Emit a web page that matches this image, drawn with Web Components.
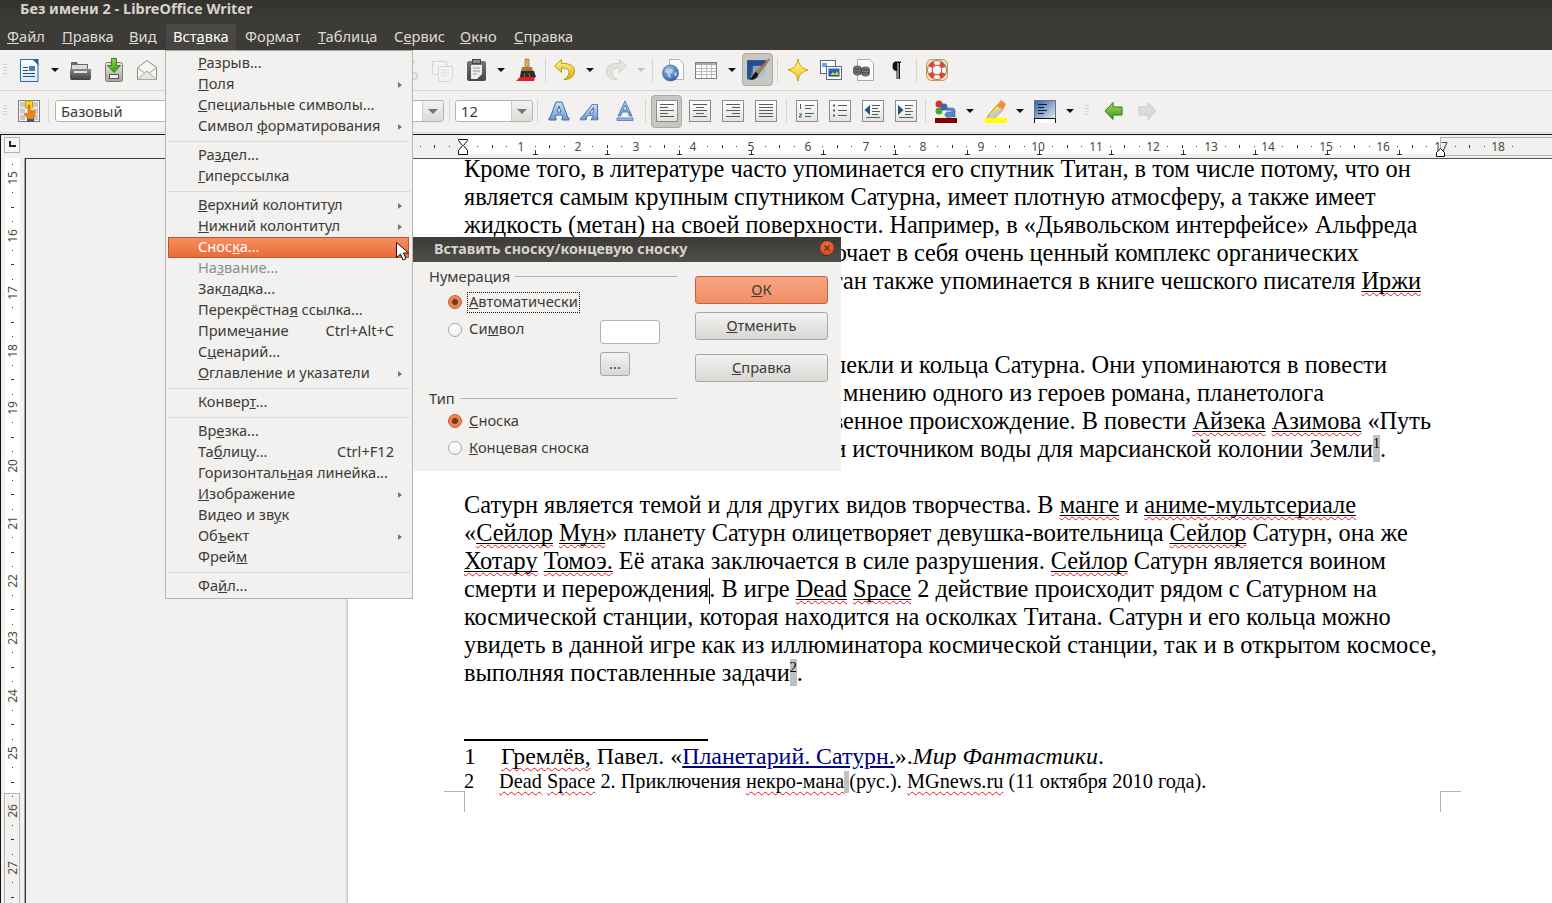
<!DOCTYPE html>
<html lang="ru">
<head>
<meta charset="utf-8">
<title>Без имени 2 - LibreOffice Writer</title>
<style>
  html, body { margin: 0; padding: 0; background: #f2f1f0; overflow: hidden; }
</style>
</head>
<body>
<lo-window>
  <lo-titlebar>Без имени 2 - LibreOffice Writer</lo-titlebar>
  <lo-menubar>
    <lo-menu-title w="55"><u>Ф</u>айл</lo-menu-title>
    <lo-menu-title w="67"><u>П</u>равка</lo-menu-title>
    <lo-menu-title w="44"><u>В</u>ид</lo-menu-title>
    <lo-menu-title w="70" active>Вст<u>а</u>вка</lo-menu-title>
    <lo-menu-title w="73" style="margin-left:2px">Фо<u>р</u>мат</lo-menu-title>
    <lo-menu-title w="76"><u>Т</u>аблица</lo-menu-title>
    <lo-menu-title w="66">С<u>е</u>рвис</lo-menu-title>
    <lo-menu-title w="54"><u>О</u>кно</lo-menu-title>
    <lo-menu-title w="70"><u>С</u>правка</lo-menu-title>
  </lo-menubar>

  <lo-toolbar>
    <lo-grip w="12"></lo-grip>
    <lo-tool icon="newdoc"></lo-tool><lo-drop w="19"></lo-drop>
    <lo-tool icon="open"></lo-tool>
    <lo-tool icon="save"></lo-tool>
    <lo-tool icon="mail"></lo-tool>
    <lo-gap w="230"></lo-gap>
    <lo-tool icon="cut"></lo-tool>
    <lo-tool icon="copy"></lo-tool>
    <lo-tool icon="paste"></lo-tool><lo-drop w="18"></lo-drop>
    <lo-tool icon="brush"></lo-tool>
    <lo-sep w="4"></lo-sep>
    <lo-tool icon="undo"></lo-tool><lo-drop w="20"></lo-drop>
    <lo-tool icon="redo"></lo-tool><lo-drop w="16" off></lo-drop>
    <lo-sep w="7"></lo-sep>
    <lo-tool icon="link"></lo-tool>
    <lo-tool icon="table"></lo-tool><lo-drop w="19"></lo-drop>
    <lo-tool icon="draw" active></lo-tool>
    <lo-sep w="7"></lo-sep>
    <lo-tool icon="star"></lo-tool>
    <lo-tool icon="gallery"></lo-tool>
    <lo-tool icon="data"></lo-tool>
    <lo-tool icon="pilcrow"></lo-tool>
    <lo-sep w="7"></lo-sep>
    <lo-tool icon="help"></lo-tool>
  </lo-toolbar>

  <lo-toolbar second>
    <lo-grip w="12"></lo-grip>
    <lo-tool icon="styles"></lo-tool>
    <lo-sep w="6"></lo-sep>
    <lo-gap w="4"></lo-gap>
    <lo-combo w="389">Базовый</lo-combo>
    <lo-sep w="11"></lo-sep>
    <lo-combo w="78">12</lo-combo>
    <lo-sep w="9"></lo-sep>
    <lo-tool icon="bold"></lo-tool>
    <lo-tool icon="italic"></lo-tool>
    <lo-tool icon="underline"></lo-tool>
    <lo-sep w="9"></lo-sep>
    <lo-tool icon="alignleft" active></lo-tool>
    <lo-tool icon="aligncenter"></lo-tool>
    <lo-tool icon="alignright"></lo-tool>
    <lo-tool icon="alignjustify"></lo-tool>
    <lo-sep w="8"></lo-sep>
    <lo-tool icon="numbers"></lo-tool>
    <lo-tool icon="bullets"></lo-tool>
    <lo-tool icon="outdent"></lo-tool>
    <lo-tool icon="indent"></lo-tool>
    <lo-sep w="7"></lo-sep>
    <lo-tool icon="fontcolor"></lo-tool><lo-drop w="16"></lo-drop>
    <lo-tool icon="highlight" w="35"></lo-tool><lo-drop w="14"></lo-drop>
    <lo-tool icon="parbg" w="36"></lo-tool><lo-drop w="14"></lo-drop>
    <lo-grip w="20" center></lo-grip>
    <lo-tool icon="back"></lo-tool>
    <lo-tool icon="forward"></lo-tool>
  </lo-toolbar>

  <lo-workspace>
    <lo-document>
      <lo-line>Кроме того, в литературе часто упоминается его спутник Титан, в том числе потому, что он</lo-line>
      <lo-line>является самым крупным спутником Сатурна, имеет плотную атмосферу, а также имеет</lo-line>
      <lo-line>жидкость (метан) на своей поверхности. Например, в «Дьявольском интерфейсе» Альфреда</lo-line>
      <lo-line end="1359">ючает в себя очень ценный комплекс органических</lo-line>
      <lo-line end="1421">Титан также упоминается в книге чешского писателя <lo-sp line>Иржи</lo-sp></lo-line>
      <lo-line></lo-line>
      <lo-line></lo-line>
      <lo-line end="1387">лекли и кольца Сатурна. Они упоминаются в повести</lo-line>
      <lo-line end="1324">мнению одного из героев романа, планетолога</lo-line>
      <lo-line end="1431">венное происхождение. В повести <lo-sp line>Айзека</lo-sp> <lo-sp line>Азимова</lo-sp> «Путь</lo-line>
      <lo-line end="1386">и источником воды для марсианской колонии Земли<lo-anchor>1</lo-anchor>.</lo-line>
      <lo-line></lo-line>
      <lo-line>Сатурн является темой и для других видов творчества. В <lo-sp line>манге</lo-sp> и <lo-sp line>аниме-мультсериале</lo-sp></lo-line>
      <lo-line>«<lo-sp line>Сейлор</lo-sp> <lo-sp line>Мун</lo-sp>» планету Сатурн олицетворяет девушка-воительница <lo-sp line>Сейлор</lo-sp> Сатурн, она же</lo-line>
      <lo-line><lo-sp line>Хотару</lo-sp> <lo-sp line>Томоэ.</lo-sp> Её атака заключается в силе разрушения. <lo-sp line>Сейлор</lo-sp> Сатурн является воином</lo-line>
      <lo-line>смерти и перерождения<lo-caret></lo-caret>. В игре <lo-sp line>Dead</lo-sp> <lo-sp line>Space</lo-sp> 2 действие происходит рядом с Сатурном на</lo-line>
      <lo-line>космической станции, которая находится на осколках Титана. Сатурн и его кольца можно</lo-line>
      <lo-line>увидеть в данной игре как из иллюминатора космической станции, так и в открытом космосе,</lo-line>
      <lo-line>выполняя поставленные задачи<lo-anchor>2</lo-anchor>.</lo-line>
      <lo-footnotes>
        <lo-note n="1" size="23.9" h="24" pad="37"><lo-sp>Гремлёв,</lo-sp> Павел. «<u style="color:#000080">Планетарий. Сатурн.</u>».<i>Мир Фантастики</i>.</lo-note>
        <lo-note n="2" size="20.3" h="26" pad="35"><lo-sp>Dead</lo-sp> <lo-sp>Space</lo-sp> 2. Приключения <lo-sp>некро-мана</lo-sp><lo-shade></lo-shade>(рус.). <lo-sp>MGnews.ru</lo-sp> (11 октября 2010 года).</lo-note>
      </lo-footnotes>
    </lo-document>
  </lo-workspace>

  <lo-menu>
    <lo-item arrow="0"><u>Р</u>азрыв...</lo-item>
    <lo-item arrow="1"><u>П</u>оля</lo-item>
    <lo-item><u>С</u>пециальные символы...</lo-item>
    <lo-item arrow="1">Символ <u>ф</u>орматирования</lo-item>
    <lo-divider></lo-divider>
    <lo-item>Ра<u>з</u>дел...</lo-item>
    <lo-item><u>Г</u>иперссылка</lo-item>
    <lo-divider></lo-divider>
    <lo-item arrow="1"><u>В</u>ерхний колонтитул</lo-item>
    <lo-item arrow="1"><u>Н</u>ижний колонтитул</lo-item>
    <lo-item hot>Снос<u>к</u>а...</lo-item>
    <lo-item off>На<u>з</u>вание...</lo-item>
    <lo-item>Зак<u>л</u>адка...</lo-item>
    <lo-item>Перекрёстна<u>я</u> ссылка...</lo-item>
    <lo-item keys="Ctrl+Alt+C">Приме<u>ч</u>ание</lo-item>
    <lo-item>С<u>ц</u>енарий...</lo-item>
    <lo-item arrow="1"><u>О</u>главление и указатели</lo-item>
    <lo-divider></lo-divider>
    <lo-item>Конвер<u>т</u>...</lo-item>
    <lo-divider></lo-divider>
    <lo-item>Вр<u>е</u>зка...</lo-item>
    <lo-item keys="Ctrl+F12">Та<u>б</u>лицу...</lo-item>
    <lo-item>Горизонталь<u>н</u>ая линейка...</lo-item>
    <lo-item arrow="1"><u>И</u>зображение</lo-item>
    <lo-item>Видео и зв<u>у</u>к</lo-item>
    <lo-item arrow="1">Об<u>ъ</u>ект</lo-item>
    <lo-item>Фрей<u>м</u></lo-item>
    <lo-divider></lo-divider>
    <lo-item>Фа<u>й</u>л...</lo-item>
  </lo-menu>

  <lo-dialog heading="Вставить сноску/концевую сноску">
    <lo-frame-head>Нумерация</lo-frame-head>
    <lo-radio-row>
      <lo-radio checked focused><u>А</u>втоматически</lo-radio>
    </lo-radio-row>
    <lo-radio-row tall>
      <lo-radio>Си<u>м</u>вол</lo-radio>
      <lo-field></lo-field>
    </lo-radio-row>
    <lo-radio-row tall>
      <span></span>
      <lo-button small>...</lo-button>
    </lo-radio-row>
    <lo-frame-head second>Тип</lo-frame-head>
    <lo-radio-row type>
      <lo-radio checked><u>С</u>носка</lo-radio>
    </lo-radio-row>
    <lo-radio-row type last>
      <lo-radio><u>К</u>онцевая сноска</lo-radio>
    </lo-radio-row>
    <lo-button slot="actions" primary><u>О</u>К</lo-button>
    <lo-button slot="actions"><u>О</u>тменить</lo-button>
    <lo-button slot="actions" spaced><u>С</u>правка</lo-button>
  </lo-dialog>

  <lo-pointer></lo-pointer>
</lo-window>

<script>
// shared by all shadow roots, Ubuntu itself is not installed
const UI_FONT = '"Noto Sans", "Open Sans", sans-serif';
const TEXT_COLOR = '#3c3b37';

const grad = (id, a, b) => `<linearGradient id="${id}" x1="0" y1="0" x2="0" y2="1"><stop offset="0" stop-color="${a}"/><stop offset="1" stop-color="${b}"/></linearGradient>`;

// the boxed paragraph icons of the formatting bar
function boxed(inner) {
    return `<defs>${grad('bx', '#ffffff', '#dfe4df')}</defs>
        <rect x="1.5" y="1.5" width="21" height="21" fill="url(#bx)" stroke="#8b8d8a"/>
        <path d="${inner}" fill="none" stroke="#5a5c5a"/>`;
}

const LETTER_A = 'M9 3h6l6 16h1v2h-7v-2h1l-1-3H9l-1 3h1v2H2v-2h1zM12 7l-2 6h4z';

const ICONS = {
    newdoc: `<defs>${grad('a', '#ffffff', '#dce8f2')}</defs>
        <path d="M3.5 1.5H17l4 4v18H3.5z" fill="url(#a)" stroke="#2a6ca6"/>
        <path d="M15 1h6.500v6.500z" fill="#1f5f9c"/>
        <path d="M6 9.500h5M6 12.500h5M6 15.500h12M6 18.500h12" stroke="#1d4f80"/>
        <rect x="12" y="8" width="6" height="5" fill="#3f7fbd"/>`,
    open: `<defs>${grad('a', '#8a8a88', '#3f3f3e')}</defs>
        <path d="M2 4h6l1 2h10v7H2z" fill="#5c6a80"/>
        <rect x="3" y="7" width="15" height="5" fill="#dedcd8"/>
        <path d="M1 11h21v9l-1 2H2l-1-2z" fill="url(#a)"/>
        <rect x="5" y="13" width="13" height="2" fill="#dedede"/>`,
    save: `<defs>${grad('a', '#e6e6da', '#a4a498')}${grad('b', '#86d24a', '#3f9a1c')}</defs>
        <rect x="3.500" y="4.500" width="17" height="19" rx="2" fill="url(#a)" stroke="#7c7c74"/>
        <rect x="7.500" y="16.500" width="9" height="4" fill="#f0f0ea" stroke="#555"/>
        <path d="M9.500.5h5v7h4l-6.500 7-6.500-7h4z" fill="url(#b)" stroke="#38861a"/>`,
    mail: `<path d="M2.500 9.500 12 2.500l9.500 7v12h-19z" fill="#f6f5f2" stroke="#8c8c8a"/>
        <path d="M2.500 21.500 12 13l9.500 8.500z" fill="#e6e5e1" stroke="#a8a8a5"/>
        <path d="M2.500 9.500 9.500 15M21.500 9.500 14.500 15" fill="none" stroke="#9c9c99"/>`,
    cut: `<g fill="none" stroke="#d5d4d1" stroke-width="2"><path d="M8 2l5 12M16 2l-5 12"/><circle cx="8" cy="18" r="3"/><circle cx="16" cy="18" r="3"/></g>`,
    copy: `<g fill="#f4f3f1" stroke="#d6d5d2"><path d="M1.500 3.500h14v13h-14z"/><path d="M7.500 8.500h14v11l-4 4h-10z"/></g>
        <path d="M10 12h9M10 15h9M10 18h6" stroke="#dedddb"/>`,
    paste: `<defs>${grad('a', '#777775', '#444442')}</defs>
        <rect x="3" y="3" width="19" height="20" rx="2" fill="url(#a)"/>
        <path d="M7 7h11v9l-5 5H7z" fill="#eeeeea"/>
        <rect x="8.500" y="1.500" width="8" height="4" fill="#8c8c8a" stroke="#444"/>
        <path d="M9 10h7M9 13h7M9 16h4" stroke="#999"/>`,
    brush: `<path d="M10 1h4v8h-4z" fill="#d9a860" stroke="#9c6c2c" stroke-width=".6"/>
        <path d="M7 9h10l1 4H6z" fill="#a87838"/>
        <path d="M6 13h13l2 6H5z" fill="#2a2a2a"/>
        <path d="M14 15l1 4M10 15l-1 4" stroke="#777"/>
        <path d="M1 23l4-4h15l-1 4z" fill="#e01e24"/>`,
    undo: `<defs>${grad('a', '#fff49a', '#d8b200')}</defs>
        <path d="M9.500 1.500 2.500 8l7 6.500V10c5 0 7.500 1 7.500 4.500 0 3-2.500 5.500-5 7 6 .5 10.500-3.500 10.500-8.500C22.500 7 16 5 9.500 5.500z" fill="url(#a)" stroke="#b89c14"/>`,
    redo: `<path d="M14.500 1.500l7 6.500-7 6.500V10c-5 0-7.500 1-7.500 4.500 0 3 2.500 5.500 5 7-6 .5-10.500-3.500-10.500-8.500C1.500 7 8 5 14.500 5.500z" fill="#e4e3e0" stroke="#d0cfcc"/>`,
    link: `<defs><radialGradient id="a" cx=".4" cy=".3" r=".8"><stop offset="0" stop-color="#9cc4ea"/><stop offset="1" stop-color="#24569c"/></radialGradient></defs>
        <path d="M8.500 1.500h10l4 4v16h-14z" fill="#fbfbfa" stroke="#b4b4b2"/>
        <circle cx="9.500" cy="15" r="8" fill="url(#a)" stroke="#2a5a98" stroke-width=".6"/>
        <path d="M5 11c3-1 4 1 6 0l1 3-3 2 1 4-3-1-1-4-2-1zM13 15l3-1v3l-2 2z" fill="#c4d8ec" opacity=".8"/>`,
    table: `<rect x="1.500" y="4.500" width="21" height="16" fill="#fbfbf9" stroke="#7e807e"/>
        <rect x="2" y="5" width="20" height="2" fill="#a8aaa8"/>
        <path d="M2 10.500h20M2 13.500h20M2 16.500h20M7.500 7v13M12.500 7v13M17.500 7v13" stroke="#bcbebc"/>`,
    draw: `<defs><linearGradient id="a" x1="0" y1="0" x2="1" y2="1"><stop offset="0" stop-color="#2a66aa"/><stop offset="1" stop-color="#c4d4e6"/></linearGradient></defs>
        <path d="M1.500 2.500h18v5H6.500v9l-2 4.500h-3z" fill="#1f4f8f" stroke="#15396c" stroke-width=".6"/>
        <path d="M6.500 7.500h13v13H4z" fill="url(#a)" opacity=".55"/>
        <path d="M23 .5l.8.8L12.500 16l-3-2.200z" fill="#b07c48" stroke="#7c5228" stroke-width=".4"/>
        <path d="M9.500 13.800l3 2.200c-1 4.500-5 6.500-9.500 5.500 3.500-1.500 4-5.500 6.500-7.700z" fill="#161616"/>`,
    star: `<defs>${grad('a', '#fff8b0', '#e8c400')}</defs>
        <path d="M12 1c1 6 3 9 10 11-7 2-9 5-10 11-1-6-3-9-10-11 7-2 9-5 10-11z" fill="url(#a)" stroke="#c4a410"/>`,
    gallery: `<defs>${grad('a', '#2f6fb4', '#1a4c8a')}</defs>
        <rect x="1.500" y="2.500" width="15" height="13" fill="#fafaf8" stroke="#5a6a80"/>
        <rect x="3" y="5" width="5" height="4" fill="#7aa0cc"/>
        <rect x="7.500" y="8.500" width="15" height="13" fill="#fafaf8" stroke="#5a6a80"/>
        <rect x="9.500" y="10.500" width="11" height="8" fill="url(#a)"/>
        <path d="M11 17l3-3 2 2 2-3 2 4z" fill="#e6c84c"/>`,
    data: `<path d="M5.500 1.500h12l4 4v17h-16z" fill="#fbfbfa" stroke="#a8a8a6"/>
        <g fill="#7a7a78" stroke="#444" stroke-width=".7"><rect x="1.500" y="8" width="8" height="9" rx="3"/><rect x="9.500" y="9" width="8" height="9" rx="3"/></g>
        <path d="M2 11h7M2 14h7M10 12h7M10 15h7" stroke="#3a3a3a"/>`,
    pilcrow: `<path d="M10.500 3.500h5.500v1.500h-1v16h-1.500V5h-1v16h-1v-8c-2.500 0-4-1.800-4-4.700s1.500-4.800 3-4.800z" fill="#111"/>`,
    help: `<rect x="1.500" y="1.500" width="21" height="21" rx="5" fill="#f2e2bc" stroke="#c09858"/>
        <circle cx="12" cy="12" r="9.500" fill="#fbfbfb" stroke="#b06a58"/>
        <circle cx="12" cy="12" r="7.200" fill="none" stroke="#e0443a" stroke-width="4.600" stroke-dasharray="5.600 5.700" stroke-dashoffset="-2.850"/>
        <circle cx="12" cy="12" r="4.800" fill="#f6f5f3" stroke="#b0483c"/>`,
    styles: `<rect x="1.500" y="1.500" width="21" height="21" fill="#f4f4f0" stroke="#7c7e7c"/>
        <g fill="#c6c8c4"><rect x="3" y="3" width="5" height="5"/><rect x="16" y="3" width="5" height="5"/><rect x="3" y="9.500" width="5" height="5"/><rect x="16" y="9.500" width="5" height="5"/><rect x="3" y="16" width="5" height="5"/><rect x="16" y="16" width="5" height="5"/></g>
        <rect x="8.500" y="2" width="7" height="7" fill="#f8d830" stroke="#c8a010"/>
        <rect x="10" y="18" width="7" height="5" fill="#2f5a9c"/>
        <path d="M11 6h2v5l5 1v5l-2 3h-5l-4-5 2-1 2 1z" fill="#f08418" stroke="#c46408" stroke-width=".6"/>`,
    bold: `<defs>${grad('a', '#cfe0f5', '#6d9ad4')}</defs>
        <path d="${LETTER_A}" fill="url(#a)" stroke="#3a6aa8"/>`,
    italic: `<defs>${grad('a', '#cfe0f5', '#6d9ad4')}</defs>
        <path d="${LETTER_A}" fill="url(#a)" stroke="#3a6aa8" transform="translate(5 3) skewX(-22) scale(.9 .85)"/>`,
    underline: `<defs>${grad('a', '#cfe0f5', '#6d9ad4')}</defs>
        <path d="M12 2 5 17h2.500l1.500-4h6l1.500 4H19zM12 6l2 5h-4z" fill="url(#a)" stroke="#3a6aa8" stroke-width=".8"/>
        <rect x="4" y="19" width="16" height="2.500" fill="#8fb8e4" stroke="#3a6aa8" stroke-width=".7"/>`,
    alignleft: boxed('M5 5.500h14M5 8.500h8M5 11.500h14M5 14.500h8M5 17.500h14'),
    aligncenter: boxed('M5 5.500h14M8 8.500h8M5 11.500h14M8 14.500h8M5 17.500h14'),
    alignright: boxed('M5 5.500h14M11 8.500h8M5 11.500h14M11 14.500h8M5 17.500h14'),
    alignjustify: boxed('M5 5.500h14M5 8.500h14M5 11.500h14M5 14.500h14M5 17.500h14'),
    numbers: boxed('M10 6.500h9M10 9.500h6M10 14.500h9M10 17.500h6') + `<path d="M5.500 5v5M4 15h3l-3 3h3" fill="none" stroke="#2f5d9c"/>`,
    bullets: boxed('M10 6.500h9M10 11.500h9M10 16.500h9') + `<path d="M5 5.500h2v2H5zM5 10.500h2v2H5zM5 15.500h2v2H5z" fill="#5a5c5a"/>`,
    outdent: boxed('M11 6.500h8M11 9.500h6M11 12.500h8M11 15.500h6M5 18.500h14') + `<path d="M9 6v10L3.500 11z" fill="#1f4f8f"/>`,
    indent: boxed('M11 6.500h8M11 9.500h6M11 12.500h8M11 15.500h6M5 18.500h14') + `<path d="M4 6v10L9.500 11z" fill="#1f4f8f"/>`,
    fontcolor: `<circle cx="5" cy="5" r="3.500" fill="#d8322c"/><circle cx="5" cy="12" r="3.500" fill="#48a828"/><circle cx="10" cy="8" r="3.500" fill="#3468b4"/>
        <path d="M12 9h6c2 0 3 1 3 3v6h-2v-1c-2 2-8 2-8-1 0-3 3-3 7-3 0-2-3-2-5-1z" fill="#5f86c0" stroke="#2f5d9c" stroke-width=".6"/>
        <rect x="1" y="19" width="22" height="5.500" fill="#800000"/>`,
    highlight: `<path d="M3 18 13 6l6 5-8 8z" fill="#f0d860" stroke="#a89838"/>
        <path d="M13 6l4-5 5 4-3 6z" fill="#f09040"/>
        <path d="M3 18l3 1h5l8-8-2-2z" fill="#c8c8c4"/>
        <rect x="1" y="19" width="22" height="5.500" fill="#ffff00"/>`,
    parbg: `<defs><linearGradient id="a" x1="0" y1="0" x2="1" y2="1"><stop offset="0" stop-color="#2f5fa8"/><stop offset="1" stop-color="#e4eaf2"/></linearGradient></defs>
        <rect x="1.500" y="1.500" width="21" height="18" fill="url(#a)" stroke="#70757c"/>
        <path d="M5 5.500h9M5 8.500h6M5 11.500h9M5 14.500h6" stroke="#0c1c3c"/>
        <rect x="1.500" y="19.500" width="21" height="5" fill="#fff" stroke="#111"/>`,
    back: `<defs>${grad('a', '#a6dc5a', '#3f9418')}</defs>
        <path d="M11 3.500 3 12l8 8.500V16h9V8h-9z" fill="url(#a)" stroke="#2f7810"/>`,
    forward: `<path d="M13 3.500l8 8.500-8 8.500V16H4V8h9z" fill="#dcdbd8" stroke="#cac9c6"/>`
};

// ---- window frame ----
class LoWindow extends HTMLElement {
    constructor() {
        super();
        this.attachShadow({ mode: 'open' }).innerHTML = `
            <style>
                :host {
                    display: flex;
                    flex-direction: column;
                    position: relative;
                    width: 1552px;
                    height: 903px;
                    overflow: hidden;
                    background: #f2f1f0;
                    color: ${TEXT_COLOR};
                    font-family: ${UI_FONT};
                }
            </style>
            <slot></slot>`;
    }
}

class LoTitlebar extends HTMLElement {
    constructor() {
        super();
        this.attachShadow({ mode: 'open' }).innerHTML = `
            <style>
                :host {
                    display: block;
                    height: 24px;
                    box-sizing: border-box;
                    padding-left: 20px;
                    background: linear-gradient(#33322e, #3c3b37);
                    color: #d8d4ca;
                    font: bold 14.5px/16px ${UI_FONT};
                    white-space: nowrap;
                }
            </style>
            <slot></slot>`;
    }
}

class LoMenubar extends HTMLElement {
    constructor() {
        super();
        this.attachShadow({ mode: 'open' }).innerHTML = `
            <style>
                :host {
                    display: flex;
                    height: 26px;
                    background: #3c3b37;
                }
            </style>
            <slot></slot>`;
    }
}

class LoMenuTitle extends HTMLElement {
    constructor() {
        super();
        this.attachShadow({ mode: 'open' }).innerHTML = `
            <style>
                :host {
                    display: block;
                    flex: none;
                    height: 26px;
                    box-sizing: border-box;
                    padding-left: 7px;
                    color: #dfdbd2;
                    font-size: 14.67px;
                    line-height: 24px;
                    white-space: nowrap;
                }
                :host([active]) {
                    background: linear-gradient(#4c4b46, #454440);
                    border-radius: 3px 3px 0 0;
                    color: #fff;
                }
            </style>
            <slot></slot>`;
    }

    connectedCallback() {
        this.style.width = this.getAttribute('w') + 'px';
    }
}

// ---- toolbars ----
class LoToolbar extends HTMLElement {
    constructor() {
        super();
        this.attachShadow({ mode: 'open' }).innerHTML = `
            <style>
                :host {
                    display: flex;
                    align-items: center;
                    height: 41px;
                    box-sizing: border-box;
                    padding-bottom: 1px;
                    background: #f2f1f0;
                    border-bottom: 1px solid #d8d6d2;
                }
                :host([second]) { height: 42px; }
            </style>
            <slot></slot>`;
    }
}

class LoTool extends HTMLElement {
    constructor() {
        super();
        this.attachShadow({ mode: 'open' });
    }

    connectedCallback() {
        const w = this.getAttribute('w') || 33;
        const icon = ICONS[this.getAttribute('icon')] || '';
        this.shadowRoot.innerHTML = `
            <style>
                :host {
                    display: flex;
                    flex: none;
                    align-items: center;
                    justify-content: center;
                    width: ${w}px;
                    height: 33px;
                    box-sizing: border-box;
                }
                :host([active]) {
                    width: 31px;
                    margin: 0 1px;
                    background: #c9c7c3;
                    border: 1px solid #aba9a5;
                    border-radius: 4px;
                }
                svg { display: block; width: 24px; height: 24px; flex: none; }
            </style>
            <svg viewBox="0 0 24 24">${icon}</svg>`;
    }
}

class LoDrop extends HTMLElement {
    constructor() {
        super();
        const off = this.hasAttribute('off');
        this.attachShadow({ mode: 'open' }).innerHTML = `
            <style>
                :host { display: flex; flex: none; align-items: center; justify-content: center; height: 33px; }
                i { width: 0; height: 0; border: 4px solid transparent; border-top-color: ${off ? '#c4c3c0' : '#111'}; border-bottom: 0; }
            </style>
            <i></i>`;
    }

    connectedCallback() {
        this.style.width = this.getAttribute('w') + 'px';
    }
}

class LoGrip extends HTMLElement {
    constructor() {
        super();
        this.attachShadow({ mode: 'open' }).innerHTML = `
            <style>
                :host { display: flex; flex: none; align-items: center; padding-left: 3px; box-sizing: border-box; }
                :host([center]) { justify-content: center; padding-left: 0; }
                i { display: block; width: 4px; height: 12px; background: repeating-linear-gradient(#d2d0cc 0 1px, transparent 1px 3px); }
            </style>
            <i></i>`;
    }

    connectedCallback() {
        this.style.width = this.getAttribute('w') + 'px';
    }
}

class LoSep extends HTMLElement {
    constructor() {
        super();
        this.attachShadow({ mode: 'open' }).innerHTML = `
            <style>
                :host { display: flex; flex: none; justify-content: center; height: 24px; }
                i { display: block; width: 1px; background: #dad8d4; }
            </style>
            <i></i>`;
    }

    connectedCallback() {
        this.style.width = this.getAttribute('w') + 'px';
    }
}

class LoGap extends HTMLElement {
    connectedCallback() {
        this.style.cssText = `display:block;flex:none;width:${this.getAttribute('w')}px`;
    }
}

class LoCombo extends HTMLElement {
    constructor() {
        super();
        this.attachShadow({ mode: 'open' }).innerHTML = `
            <style>
                :host {
                    display: flex;
                    flex: none;
                    height: 22px;
                    box-sizing: border-box;
                    background: #fff;
                    border: 1px solid #b5b3af;
                    border-radius: 3px;
                    font-size: 14.67px;
                    line-height: 21px;
                }
                .text { flex: 1; padding-left: 5px; }
                .btn {
                    display: flex;
                    align-items: center;
                    justify-content: center;
                    width: 20px;
                    border-left: 1px solid #cfcdc9;
                    background: linear-gradient(#f4f3f2, #dddbd8);
                    border-radius: 0 2px 2px 0;
                }
                .btn i { width: 0; height: 0; border: 5px solid transparent; border-top: 5px solid #77756f; border-bottom: 0; }
            </style>
            <div class="text"><slot></slot></div>
            <div class="btn"><i></i></div>`;
    }

    connectedCallback() {
        this.style.width = this.getAttribute('w') + 'px';
    }
}

// ---- rulers ----
const CM = 57.5;
const ORIGIN_X = 463;

function hRulerSvg() {
    let s = '';
    // margin zones are grey, text area white
    s += `<rect x="25" y="2" width="438" height="17" fill="#f2f1f0"/>`;
    s += `<rect x="463" y="1" width="977" height="18" fill="#fff"/>`;
    s += `<rect x="1440.500" y="2.500" width="120" height="18" fill="#f2f1f0" stroke="#b5b3af"/>`;
    for (let q = -2 * 4; q <= 18 * 4 + 1; q++) {
        const x = Math.round(ORIGIN_X + q * CM / 4);
        if (q === 0) continue;
        if (q % 4 === 0) {
            if (q > 0) s += `<text x="${x}" y="16" text-anchor="middle" font-size="12" fill="#4a4a46">${q / 4}</text>`;
        } else if (q % 2 === 0) {
            s += `<rect x="${x}" y="10" width="1" height="3" fill="#333"/>`;
        } else {
            s += `<rect x="${x}" y="11" width="1" height="1" fill="#444"/>`;
        }
    }
    // default tab stops
    for (let x = ORIGIN_X + 72; x < 1440; x += 72) {
        s += `<path d="M${x + .5} 15v4M${x - 2} 19.500h5" stroke="#333" fill="none"/>`;
    }
    // margin handles
    s += `<path d="M458.500 4.500h9v1l-4 5 4 5v4h-9v-4l4-5-4-5z" fill="#fff" stroke="#111"/>`;
    s += `<path d="M1436.500 21.500v-4l4-4 4 4v4z" fill="#fff" stroke="#111"/>`;
    return s;
}

function vRulerSvg() {
    let s = `<rect x="5" y="0" width="15" height="747" fill="#fff"/>`;
    s += `<rect x="4.500" y="635.500" width="15" height="120" fill="#f2f1f0" stroke="#b5b3af"/>`;
    // 15 cm sits 20px below the top of this strip
    const first = 20;
    for (let q = -1; q < 12 * 4 + 3; q++) {
        const y = Math.round(first + q * CM / 4);
        if (q % 4 === 0) {
            s += `<text transform="translate(17 ${y}) rotate(-90)" text-anchor="middle" font-size="12" fill="#4a4a46">${15 + q / 4}</text>`;
        } else if (q % 2 === 0) {
            s += `<rect x="11" y="${y}" width="3" height="1" fill="#333"/>`;
        } else {
            s += `<rect x="12" y="${y}" width="1" height="1" fill="#444"/>`;
        }
    }
    return s;
}

class LoWorkspace extends HTMLElement {
    constructor() {
        super();
        this.attachShadow({ mode: 'open' }).innerHTML = `
            <style>
                :host {
                    display: grid;
                    grid-template-columns: 24px 323px 1fr;
                    grid-template-rows: 23px 1fr;
                    flex: 1;
                    min-height: 0;
                    border-top: 1px solid #111;
                    border-left: 1px solid #111;
                    margin-top: 1px;
                    background: #f2f1f0;
                }
                svg { display: block; font-family: ${UI_FONT}; }
                .hruler { grid-column: 1 / -1; margin-left: -1px; }
                .vruler { margin-left: -1px; }
                .gutter {
                    border-left: 1px solid #3c3b37;
                    border-top: 1px solid #3c3b37;
                    box-shadow: inset -4px 0 3px -3px #bdbbb8, -1px 0 0 #a9a7a3;
                }
                .page {
                    min-width: 0;
                    overflow: hidden;
                    background: #fff;
                    border-top: 1px solid #55544f;
                }
                .corner { position: absolute; left: 4px; top: 137px; width: 14px; height: 14px; border: 1px solid #b5b3af; background: #f6f5f4; }
                .corner i { position: absolute; left: 4px; top: 3px; width: 2px; height: 6px; background: #222; }
                .corner b { position: absolute; left: 4px; top: 7px; width: 7px; height: 2px; background: #222; }
            </style>
            <svg class="hruler" width="1552" height="23">${hRulerSvg()}</svg>
            <div class="corner"><i></i><b></b></div>
            <svg class="vruler" width="25" height="747">${vRulerSvg()}</svg>
            <div class="gutter"></div>
            <div class="page"><slot></slot></div>`;
    }
}

// ---- document ----
class LoDocument extends HTMLElement {
    constructor() {
        super();
        this.attachShadow({ mode: 'open' }).innerHTML = `
            <style>
                :host {
                    display: block;
                    position: relative;
                    height: 760px;
                    margin-top: -4px;
                    padding-left: 116px;
                    color: #000;
                    font-family: "Liberation Serif", serif;
                    font-size: 24.32px;
                }
                /* page corner marks */
                i { position: absolute; top: 636px; width: 20px; height: 20px; }
                .l { left: 96px; border-top: 1px solid #b5b3af; border-right: 1px solid #b5b3af; }
                .r { left: 1092px; border-top: 1px solid #b5b3af; border-left: 1px solid #b5b3af; }
            </style>
            <slot></slot>
            <i class="l"></i><i class="r"></i>`;
    }
}

class LoLine extends HTMLElement {
    constructor() {
        super();
        this.attachShadow({ mode: 'open' }).innerHTML = `
            <style>
                :host {
                    display: block;
                    height: 28px;
                    line-height: 28px;
                    white-space: nowrap;
                }
                :host([end]) { text-align: right; }
            </style>
            <slot></slot>`;
    }

    connectedCallback() {
        // lines that run under the dialog are placed by their right end
        if (this.hasAttribute('end')) {
            this.style.width = (parseInt(this.getAttribute('end')) - 464) + 'px';
        }
    }
}

class LoSp extends HTMLElement {
    constructor() {
        super();
        // no whitespace around the span: this is inline and it would show
        this.attachShadow({ mode: 'open' }).innerHTML = `<style>
                :host { display: inline; }
                .wave {
                    text-decoration: underline wavy #e8121c 1px;
                    text-underline-offset: 3px;
                    text-decoration-skip-ink: none;
                }
                :host([line]) { text-decoration: underline #000 1px; text-underline-offset: 2px; text-decoration-skip-ink: none; }
            </style><span class="wave"><slot></slot></span>`;
    }
}

class LoAnchor extends HTMLElement {
    constructor() {
        super();
        this.attachShadow({ mode: 'open' }).innerHTML = `<style>
                :host {
                    display: inline-block;
                    vertical-align: top;
                    height: 27px;
                    background: #c0c0c0;
                    font-size: 14px;
                    line-height: 18px;
                }
            </style><slot></slot>`;
    }
}

class LoCaret extends HTMLElement {
    connectedCallback() {
        this.style.cssText = 'display:inline-block;width:1px;height:26px;margin-right:-1px;background:#000;vertical-align:-7px';
    }
}

class LoShade extends HTMLElement {
    connectedCallback() {
        this.style.cssText = 'display:inline-block;width:5px;height:22px;background:#c0c0c0;vertical-align:-5px';
    }
}

class LoFootnotes extends HTMLElement {
    constructor() {
        super();
        this.attachShadow({ mode: 'open' }).innerHTML = `
            <style>
                :host { display: block; margin-top: 52px; }
                .rule { width: 244px; height: 2px; background: #000; margin-bottom: 3px; }
            </style>
            <div class="rule"></div>
            <slot></slot>`;
    }
}

class LoNote extends HTMLElement {
    constructor() {
        super();
        this.attachShadow({ mode: 'open' });
    }

    connectedCallback() {
        const size = this.getAttribute('size');
        const h = this.getAttribute('h');
        this.shadowRoot.innerHTML = `
            <style>
                :host {
                    display: flex;
                    height: ${h}px;
                    line-height: ${h}px;
                    white-space: nowrap;
                    font-size: ${size}px;
                }
                .n { width: ${this.getAttribute('pad')}px; flex: none; }
            </style>
            <span class="n">${this.getAttribute('n')}</span>
            <span><slot></slot></span>`;
    }
}

// ---- open menu ----
class LoMenu extends HTMLElement {
    constructor() {
        super();
        this.attachShadow({ mode: 'open' }).innerHTML = `
            <style>
                :host {
                    display: block;
                    position: absolute;
                    left: 165px;
                    top: 50px;
                    width: 248px;
                    height: 549px;
                    box-sizing: border-box;
                    padding: 2px 2px 0 2px;
                    background: #f2f1f0;
                    border: 1px solid #b8b5b0;
                    border-top-color: #a8a5a0;
                    font-size: 14.6px;
                    z-index: 5;
                }
            </style>
            <slot></slot>`;
    }
}

class LoItem extends HTMLElement {
    constructor() {
        super();
        this.attachShadow({ mode: 'open' });
    }

    connectedCallback() {
        const keys = this.getAttribute('keys');
        const arrow = this.getAttribute('arrow') === '1';
        this.shadowRoot.innerHTML = `
            <style>
                :host {
                    display: flex;
                    height: 21px;
                    box-sizing: border-box;
                    padding-left: 30px;
                    color: #3c3b37;
                    line-height: 18px;
                    white-space: nowrap;
                }
                :host([off]) { color: #8f8e8b; }
                :host([hot]) {
                    height: 21px;
                    margin-right: 1px;
                    padding-left: 29px;
                    background: linear-gradient(#f58f5f, #ea6a39);
                    border: 1px solid #c4552a;
                    color: #fff;
                    line-height: 16px;
                }
                .text { flex: 1; }
                .keys { margin-right: 16px; }
                .arrow {
                    align-self: center;
                    width: 0;
                    height: 0;
                    margin-right: 8px;
                    border: 3px solid transparent;
                    border-left: 4px solid #77756f;
                    border-right: 0;
                }
            </style>
            <span class="text"><slot></slot></span>
            ${keys ? `<span class="keys">${keys}</span>` : ''}
            ${arrow ? '<i class="arrow"></i>' : ''}`;
    }
}

class LoDivider extends HTMLElement {
    constructor() {
        super();
        this.attachShadow({ mode: 'open' }).innerHTML = `
            <style>
                :host { display: flex; align-items: center; height: 8px; }
                i { display: block; flex: 1; height: 1px; background: #dcdad6; }
            </style>
            <i></i>`;
    }
}

// ---- dialog ----
class LoDialog extends HTMLElement {
    constructor() {
        super();
        this.attachShadow({ mode: 'open' });
    }

    connectedCallback() {
        this.shadowRoot.innerHTML = `
            <style>
                :host {
                    display: block;
                    position: absolute;
                    left: 413px;
                    top: 237px;
                    width: 428px;
                    height: 234px;
                    background: #f2f1f0;
                    font-size: 14.67px;
                    z-index: 6;
                }
                .head {
                    display: flex;
                    align-items: center;
                    justify-content: space-between;
                    height: 25px;
                    box-sizing: border-box;
                    padding: 0 7px 3px 21px;
                    background: linear-gradient(#3c3b37, #504e49);
                    color: #d8d4ca;
                    font-weight: bold;
                    font-size: 14.3px;
                    white-space: nowrap;
                }
                .close {
                    width: 14px;
                    height: 14px;
                    border-radius: 50%;
                    background: radial-gradient(circle at 50% 30%, #f0703c, #c8431c);
                    box-shadow: 0 0 0 1px #3c3b37;
                }
                svg { display: block; }
                .body { display: flex; padding-top: 7px; }
                .left { width: 248px; margin-left: 16px; }
                .right { display: flex; flex-direction: column; width: 133px; margin: 7px 0 0 18px; }
            </style>
            <div class="head">
                <span>${this.getAttribute('heading')}</span>
                <div class="close"><svg width="14" height="14" viewBox="0 0 14 14"><path d="M4.500 4.500l5 5M9.500 4.500l-5 5" stroke="#7c2a10" stroke-width="1.500"/></svg></div>
            </div>
            <div class="body">
                <div class="left"><slot></slot></div>
                <div class="right"><slot name="actions"></slot></div>
            </div>`;
    }
}

class LoFrameHead extends HTMLElement {
    constructor() {
        super();
        this.attachShadow({ mode: 'open' }).innerHTML = `
            <style>
                :host {
                    display: flex;
                    align-items: center;
                    gap: 5px;
                    height: 16px;
                    box-sizing: border-box;
                    padding-bottom: 2px;
                    line-height: 14px;
                }
                :host([second]) { margin-top: 15px; }
                i { display: block; flex: 1; height: 1px; margin-top: 1px; background: #b8b6b2; }
            </style>
            <slot></slot><i></i>`;
    }
}

class LoRadioRow extends HTMLElement {
    constructor() {
        super();
        this.attachShadow({ mode: 'open' }).innerHTML = `
            <style>
                :host {
                    display: grid;
                    grid-template-columns: 171px auto;
                    align-items: center;
                    height: 20px;
                    margin-top: 7px;
                }
                :host([tall]) { height: 24px; margin-top: 8px; align-items: start; }
                :host([type]) { margin-top: 4px; }
                :host([last]) { margin-top: 7px; }
            </style>
            <slot></slot>`;
    }
}

class LoRadio extends HTMLElement {
    constructor() {
        super();
        this.attachShadow({ mode: 'open' }).innerHTML = `
            <style>
                :host { display: flex; align-items: center; padding-left: 19px; white-space: nowrap; }
                .dot {
                    flex: none;
                    width: 14px;
                    height: 14px;
                    box-sizing: border-box;
                    margin-right: 6px;
                    border: 1px solid #a9a7a3;
                    border-radius: 50%;
                    background: linear-gradient(#fff, #f2f1f0);
                }
                :host([checked]) .dot {
                    border-color: #c9542a;
                    background: radial-gradient(circle, #6e3a24 0 2.5px, #ee7c4c 3.5px, #f19a72 100%);
                }
                .label { padding: 0 1px 2px; line-height: 17px; }
                :host([focused]) .label { outline: 1px dotted #111; outline-offset: 0; }
            </style>
            <i class="dot"></i>
            <span class="label"><slot></slot></span>`;
    }
}

class LoField extends HTMLElement {
    connectedCallback() {
        this.style.cssText = 'display:block;width:60px;height:24px;box-sizing:border-box;background:#fff;border:1px solid #b5b3af;border-radius:3px';
    }
}

class LoButton extends HTMLElement {
    constructor() {
        super();
        this.attachShadow({ mode: 'open' }).innerHTML = `
            <style>
                :host {
                    display: block;
                    height: 28px;
                    box-sizing: border-box;
                    margin-bottom: 8px;
                    background: linear-gradient(#f4f3f2, #d9d7d4);
                    border: 1px solid #a9a7a3;
                    border-radius: 3px;
                    text-align: center;
                    line-height: 24px;
                    white-space: nowrap;
                }
                :host([spaced]) { margin-top: 6px; }
                :host([primary]) {
                    background: linear-gradient(#f7a684, #f08e66);
                    border-color: #c4623a;
                }
                :host([small]) { width: 30px; height: 24px; margin: 0; line-height: 20px; }
            </style>
            <slot></slot>`;
    }
}

class LoPointer extends HTMLElement {
    constructor() {
        super();
        this.attachShadow({ mode: 'open' }).innerHTML = `
            <style>
                :host { display: block; position: absolute; left: 395px; top: 241px; width: 15px; height: 22px; z-index: 7; }
            </style>
            <svg width="15" height="22" viewBox="0 0 15 22"><path d="M1.500 1.500v15l4-3.500 2.500 6 3-1.300-2.500-5.700h5z" fill="#fff" stroke="#111" stroke-linejoin="round"/></svg>`;
    }
}

const ELEMENTS = {
    'lo-window': LoWindow, 'lo-titlebar': LoTitlebar, 'lo-menubar': LoMenubar, 'lo-menu-title': LoMenuTitle,
    'lo-toolbar': LoToolbar, 'lo-tool': LoTool, 'lo-drop': LoDrop, 'lo-grip': LoGrip, 'lo-sep': LoSep, 'lo-gap': LoGap,
    'lo-combo': LoCombo, 'lo-workspace': LoWorkspace, 'lo-document': LoDocument, 'lo-line': LoLine, 'lo-sp': LoSp,
    'lo-anchor': LoAnchor, 'lo-caret': LoCaret, 'lo-shade': LoShade, 'lo-footnotes': LoFootnotes, 'lo-note': LoNote,
    'lo-menu': LoMenu, 'lo-item': LoItem, 'lo-divider': LoDivider, 'lo-dialog': LoDialog, 'lo-frame-head': LoFrameHead,
    'lo-radio-row': LoRadioRow, 'lo-radio': LoRadio, 'lo-field': LoField, 'lo-button': LoButton, 'lo-pointer': LoPointer
};
for (const [name, cls] of Object.entries(ELEMENTS)) {
    customElements.define(name, cls);
}
</script>
</body>
</html>
